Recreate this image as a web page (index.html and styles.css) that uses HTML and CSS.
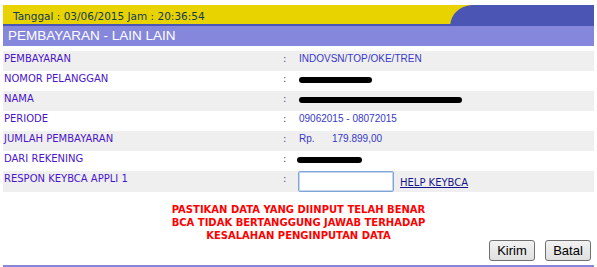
FILE: index.html
```html
<!DOCTYPE html>
<html>
<head>
<meta charset="utf-8">
<link rel="stylesheet" href="styles.css">
</head>
<body>
<div class="page">
  <div class="topbar">
    <div class="date">Tanggal : 03/06/2015 Jam : 20:36:54</div>
    <svg class="swoosh" width="144" height="21" viewBox="0 0 144 21"><path d="M0 21 C1 9 9 1 22 0 L144 0 L144 21 Z" fill="#4b55b3"/></svg>
  </div>
  <div class="titlebar">PEMBAYARAN - LAIN LAIN</div>
  <div class="form">
    <div class="row alt"><div class="label">PEMBAYARAN</div><div class="colon">:</div><div class="value">INDOVSN/TOP/OKE/TREN</div></div>
    <div class="row"><div class="label">NOMOR PELANGGAN</div><div class="colon">:</div><div class="value"><span class="redact r1"></span></div></div>
    <div class="row alt"><div class="label">NAMA</div><div class="colon">:</div><div class="value"><span class="redact r2"></span></div></div>
    <div class="row"><div class="label">PERIODE</div><div class="colon">:</div><div class="value">09062015 - 08072015</div></div>
    <div class="row alt"><div class="label">JUMLAH PEMBAYARAN</div><div class="colon">:</div><div class="value"><span class="cur">Rp.</span>179.899,00</div></div>
    <div class="row"><div class="label">DARI REKENING</div><div class="colon">:</div><div class="value"><span class="redact r3"></span></div></div>
    <div class="row alt tall"><div class="label">RESPON KEYBCA APPLI 1</div><div class="colon">:</div><div class="value inputcell"><input class="resp" type="text"><a class="help" href="#">HELP KEYBCA</a></div></div>
  </div>
  <div class="notice">PASTIKAN DATA YANG DIINPUT TELAH BENAR<br>BCA TIDAK BERTANGGUNG JAWAB TERHADAP<br>KESALAHAN PENGINPUTAN DATA</div>
  <div class="actions"><button class="btn">Kirim</button><button class="btn">Batal</button></div>
  <div class="bottomline"></div>
</div>
</body>
</html>
```
FILE: styles.css
```css
html, body { margin: 0; padding: 0; background: #fff; }
.page { margin: 5px 3px 0 3px; width: 591px; }
.topbar {
  height: 21px;
  display: flex;
  justify-content: space-between;
  background: linear-gradient(#e8d300 0, #e8d300 19px, #4b55b3 19px, #4b55b3 21px);
}
.date {
  font-family: "DejaVu Sans", Verdana, sans-serif;
  font-size: 10.5px;
  color: #0f3a55;
  padding: 5px 0 0 10px;
  line-height: 12px;
}
.swoosh { display: block; }
.titlebar {
  height: 20px;
  background: #8587dc;
  color: #fff;
  font-family: "Liberation Sans", Arial, sans-serif;
  font-size: 13.5px;
  line-height: 20px;
  padding-left: 5px;
}
.form { margin-top: 5px; }
.row {
  display: grid;
  grid-template-columns: 280px 16px 1fr;
  height: 20px;
  align-items: start;
}
.row.alt { background: #efefef; }
.row.tall { height: 21px; }
.label {
  font-family: "DejaVu Sans", Verdana, sans-serif;
  font-size: 10px;
  color: #4a14cc;
  padding: 2px 0 0 1px;
  line-height: 12px;
}
.colon {
  font-family: "DejaVu Sans", Verdana, sans-serif;
  font-size: 10px;
  color: #4a4a8a;
  padding-top: 2px;
  line-height: 12px;
}
.value {
  font-family: "Liberation Sans", Arial, sans-serif;
  font-size: 10px;
  color: #3838c8;
  padding-top: 2px;
  line-height: 12px;
  display: flex;
  align-items: center;
}
.cur { width: 33px; }
.redact {
  display: block;
  height: 6px;
  background: #000;
  border-radius: 3px;
  margin-top: 4px;
}
.r1 { width: 73px; }
.r2 { width: 163px; }
.r3 { width: 65px; margin-left: -2px; }
.inputcell { padding-top: 0; align-items: flex-end; }
.resp {
  box-sizing: border-box;
  width: 96px;
  height: 21px;
  margin: 0 6px 0 -1px;
  border: 1px solid #7fa4d6;
  border-radius: 2px;
  box-shadow: inset 0 0 0 1px #c4d6ee;
  padding: 0;
  outline: none;
}
.help {
  font-family: "DejaVu Sans", Verdana, sans-serif;
  font-size: 10px;
  color: #16168a;
  text-decoration: underline;
  margin-bottom: 3px;
}
.notice {
  margin-top: 11px;
  text-align: center;
  font-family: "DejaVu Sans", Verdana, sans-serif;
  font-weight: bold;
  font-size: 10px;
  line-height: 13px;
  color: #ff0000;
}
.actions {
  display: flex;
  justify-content: flex-end;
  gap: 10px;
  padding-right: 3px;
  margin-top: -2px;
}
.btn {
  box-sizing: border-box;
  height: 21px;
  min-width: 46px;
  font-family: "Liberation Sans", Arial, sans-serif;
  font-size: 13px;
  color: #000;
  background: linear-gradient(#f2f2f2, #e0e0e0);
  border: 1px solid #707070;
  border-radius: 3px;
  padding: 0 6px;
}
.bottomline { height: 2px; background: #8587dc; margin-top: 4px; }
```
